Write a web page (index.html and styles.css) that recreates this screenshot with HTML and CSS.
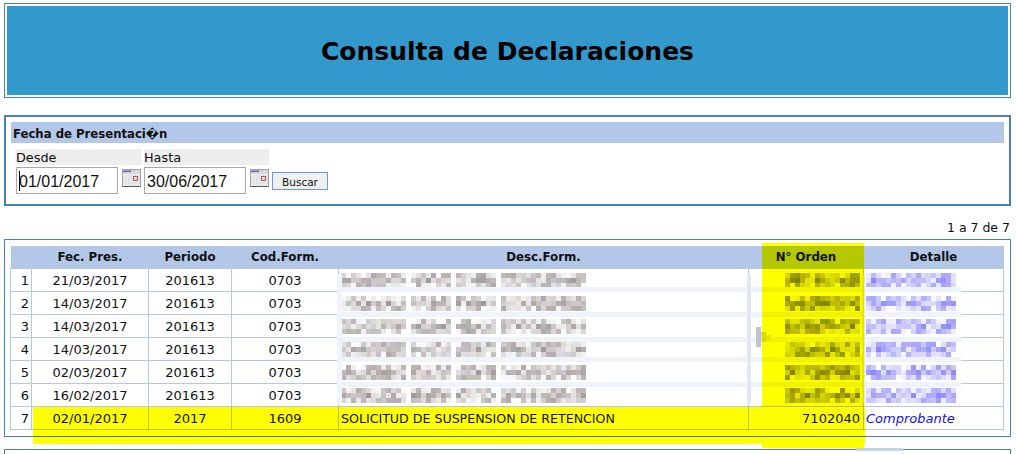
FILE: index.html
```html
<!DOCTYPE html>
<html lang="es">
<head>
<meta charset="utf-8">
<title>Consulta de Declaraciones</title>
<link rel="stylesheet" href="styles.css">
</head>
<body>
<main class="page">
  <header class="banner"><h1>Consulta de Declaraciones</h1></header>

  <section class="filter">
    <h2 class="filter-title">Fecha de Presentaci&#xFFFD;n</h2>
    <div class="filter-fields">
      <div class="field">
        <label class="field-label" for="desde">Desde</label>
        <div class="field-control">
          <input class="date-input" id="desde" value="01/01/2017">
          <span class="caret"></span>
          <svg class="cal" viewBox="0 0 19 19" width="19" height="19"><use href="#cal"/></svg>
        </div>
      </div>
      <div class="field">
        <label class="field-label" for="hasta">Hasta</label>
        <div class="field-control">
          <input class="date-input" id="hasta" value="30/06/2017">
          <svg class="cal" viewBox="0 0 19 19" width="19" height="19"><use href="#cal"/></svg>
        </div>
      </div>
      <button class="search" type="button">Buscar</button>
    </div>
  </section>

  <p class="pager">1 a 7 de 7</p>

  <section class="results">
    <table class="grid">
      <colgroup>
        <col class="c-n"><col class="c-fec"><col class="c-per"><col class="c-cod"><col class="c-desc"><col class="c-ord"><col class="c-det">
      </colgroup>
      <thead>
        <tr><th></th><th>Fec. Pres.</th><th>Periodo</th><th>Cod.Form.</th><th>Desc.Form.</th><th>N° Orden</th><th>Detalle</th></tr>
      </thead>
      <tbody>
        <tr><td class="num">1</td><td>21/03/2017</td><td>201613</td><td>0703</td><td class="left"><canvas class="mosaic" data-kind="desc" data-seed="11"></canvas></td><td class="right"><canvas class="mosaic" data-kind="ord" data-seed="12"></canvas></td><td class="left"><canvas class="mosaic" data-kind="det" data-seed="13"></canvas></td></tr>
        <tr><td class="num">2</td><td>14/03/2017</td><td>201613</td><td>0703</td><td class="left"><canvas class="mosaic" data-kind="desc" data-seed="21"></canvas></td><td class="right"><canvas class="mosaic" data-kind="ord" data-seed="22"></canvas></td><td class="left"><canvas class="mosaic" data-kind="det" data-seed="23"></canvas></td></tr>
        <tr><td class="num">3</td><td>14/03/2017</td><td>201613</td><td>0703</td><td class="left"><canvas class="mosaic" data-kind="desc" data-seed="31"></canvas></td><td class="right"><canvas class="mosaic" data-kind="ord" data-seed="32"></canvas></td><td class="left"><canvas class="mosaic" data-kind="det" data-seed="33"></canvas></td></tr>
        <tr><td class="num">4</td><td>14/03/2017</td><td>201613</td><td>0703</td><td class="left"><canvas class="mosaic" data-kind="desc" data-seed="41"></canvas></td><td class="right"><canvas class="mosaic" data-kind="ord" data-seed="42"></canvas></td><td class="left"><canvas class="mosaic" data-kind="det" data-seed="43"></canvas></td></tr>
        <tr><td class="num">5</td><td>02/03/2017</td><td>201613</td><td>0703</td><td class="left"><canvas class="mosaic" data-kind="desc" data-seed="51"></canvas></td><td class="right"><canvas class="mosaic" data-kind="ord" data-seed="52"></canvas></td><td class="left"><canvas class="mosaic" data-kind="det" data-seed="53"></canvas></td></tr>
        <tr><td class="num">6</td><td>16/02/2017</td><td>201613</td><td>0703</td><td class="left"><canvas class="mosaic" data-kind="desc" data-seed="61"></canvas></td><td class="right"><canvas class="mosaic" data-kind="ord" data-seed="62"></canvas></td><td class="left"><canvas class="mosaic" data-kind="det" data-seed="63"></canvas></td></tr>
        <tr><td class="num">7</td><td>02/01/2017</td><td>2017</td><td>1609</td><td class="left desc-text">SOLICITUD DE SUSPENSION DE RETENCION</td><td class="right">7102040</td><td class="left"><a class="link" href="#">Comprobante</a></td></tr>
      </tbody>
    </table>

    <div class="smudge band b1"></div>
    <div class="smudge band b2"></div>
    <div class="smudge band b3"></div>
    <div class="smudge band b4"></div>
    <div class="smudge band b5"></div>
    <div class="smudge vbar v1"></div>
    <div class="smudge vbar v2"></div>
    <div class="smudge vbar v3"></div>
    <svg class="blob" width="15" height="20" viewBox="0 0 15 20"><rect x="0" y="0" width="5" height="20" fill="#c4c4c4"/><rect x="5" y="5" width="5" height="10" fill="#d8d8d8"/><rect x="10" y="8" width="5" height="5" fill="#e4e4e4"/></svg>
    <div class="marker marker-row"></div>
    <div class="marker marker-col"></div>
  </section>

  <section class="next-panel"><div class="next-smudge"></div></section>
</main>

<svg class="defs" width="0" height="0" aria-hidden="true">
  <symbol id="cal" viewBox="0 0 19 19">
    <rect x="0.5" y="0.5" width="18" height="17" fill="#f0f0f0" stroke="#a0a0a0"/>
    <rect x="1" y="1" width="17" height="4" fill="#d8d8d8"/>
    <rect x="1" y="1.6" width="8" height="1.4" fill="#5a5ab0"/>
    <path d="M4 5v12M7 5v12M10 5v12M13 5v12M16 5v12M1 8h17M1 11h17M1 14h17" stroke="#dcdcdc" stroke-width="1" fill="none"/>
    <rect x="11.5" y="7.5" width="4" height="4" fill="#e8d8d8" stroke="#b06060"/>
    <path d="M0.5 17.5h18" stroke="#555"/>
  </symbol>
</svg>
<script src="mosaic.js"></script>
</body>
</html>
```
FILE: styles.css
```css
html, body { margin: 0; padding: 0; height: 454px; overflow: hidden; background: #fff; }
body { font-family: "DejaVu Sans", Verdana, sans-serif; font-size: 13px; color: #111; }

.page { width: 1007px; padding: 3px 0 0 4px; }

.banner { height: 95px; box-sizing: border-box; border: 1px solid #4682b4; padding: 2px; }
.banner h1 {
  margin: 0; height: 100%; box-sizing: border-box; padding-top: 2px; display: flex; align-items: center; justify-content: center;
  background: #3399cc; color: #000; font-size: 25px; font-weight: bold;
}

.filter {
  margin-top: 17px; height: 91px; box-sizing: border-box;
  border: 2px solid #4682b4; padding: 5px;
}
.filter-title {
  margin: 0; height: 21px; line-height: 24px; padding-left: 2px;
  background: #b3c8e8; font-size: 11.7px; font-weight: bold; color: #111;
}
.filter-fields { display: flex; align-items: flex-start; gap: 3px; padding: 6px 0 0 5px; }
.field { width: 125px; }
.field-label { display: block; height: 16px; line-height: 18px; background: #eeeeee; font-size: 12.8px; }
.field-control { display: flex; align-items: flex-start; gap: 4px; margin-top: 2px; position: relative; }
.date-input {
  width: 102px; height: 27px; box-sizing: border-box; margin: 0; padding: 2px 0 0 2px;
  border: 1px solid #a9a9a9; background: #fff; color: #111;
  font-family: "Liberation Sans", sans-serif; font-size: 16px;
}
.caret { position: absolute; left: 3px; top: 4px; width: 1px; height: 20px; background: #000; }
.cal { margin-top: 2px; display: block; flex: none; }
.search {
  margin: 23px 0 0 0; width: 56px; height: 18px; box-sizing: border-box; padding: 1px 0 0 0;
  border: 1px solid #6a9bd1; background: #f0f0f0; color: #111;
  font-family: "DejaVu Sans", sans-serif; font-size: 10.5px; line-height: 16px;
}

.pager { margin: 0; height: 33px; box-sizing: border-box; padding: 14px 1px 0 0; text-align: right; font-size: 12.5px; line-height: 15px; }

.results { position: relative; height: 198px; box-sizing: border-box; border: 1px solid #4682b4; padding: 6px; }
.grid { width: 993px; margin-left: -1px; table-layout: fixed; border-collapse: collapse; font-size: 13px; }
.c-n { width: 21px; } .c-fec { width: 117px; } .c-per { width: 83px; } .c-cod { width: 107px; }
.c-desc { width: 410px; } .c-ord { width: 115px; } .c-det { width: 140px; }
.grid th { height: 22px; padding: 0; background: #b3c8e8; font-size: 11.8px; font-weight: bold; text-align: center; border: 0; color: #111; }
.grid td { height: 22px; padding: 0; text-align: center; border: 1px solid #b3c8e8; white-space: nowrap; overflow: hidden; }
.grid td.num { text-align: right; padding-right: 2px; }
.grid td.left { text-align: left; padding-left: 2px; font-size: 12px; }
.grid td.desc-text { font-size: 12.6px; }
.grid td.right { text-align: right; padding-right: 3px; }
.link { color: #1010ee; font-style: italic; text-decoration: none; font-size: 13px; }
.mosaic { display: inline-block; vertical-align: middle; }

.smudge { position: absolute; background: #eff3fa; }
.band { left: 332px; width: 624px; height: 5px; }
.b1 { top: 47px; } .b2 { top: 72px; } .b3 { top: 97px; } .b4 { top: 117px; } .b5 { top: 142px; }
.vbar { top: 34px; height: 130px; width: 4px; background: #dfe8f4; }
.v1 { left: 742px; }
.v2 { left: 332px; width: 5px; background: #eff3fa; }
.v3 { left: 857px; width: 3px; }
.blob { position: absolute; left: 751px; top: 87px; }

.marker { position: absolute; background: #ffff00; mix-blend-mode: multiply; }
.marker-row { left: 28px; top: 167px; width: 832px; height: 37px; }
.marker-col { left: 757px; top: 3px; width: 102px; height: 205px; }

.next-panel { position: relative; margin-top: 12px; height: 20px; border: 1px solid #4682b4; }
.next-smudge { position: absolute; left: 851px; top: -2px; width: 47px; height: 3px; background: #c4d6e6; }

.defs { position: absolute; }
```
FILE: mosaic.js
```js
(function () {
  var kinds = {
    desc: { segs: [[0, 13], [14, 8], [23, 8], [32, 17]], rows: 3, tint: [150, 142, 142], spread: 0.75 },
    ord:  { segs: [[0, 15]], rows: 3, tint: [120, 120, 110], spread: 0.8 },
    det:  { segs: [[0, 18]], rows: 3, tint: [130, 125, 250], spread: 0.75 }
  };
  var size = 5;
  document.querySelectorAll('canvas.mosaic').forEach(function (c) {
    var k = kinds[c.dataset.kind];
    var seed = Number(c.dataset.seed) * 7919;
    function rnd() { seed = (seed * 16807) % 2147483647; return (seed & 0xffff) / 65535; }
    var last = k.segs[k.segs.length - 1];
    var cols = last[0] + last[1];
    c.width = cols * size;
    c.height = k.rows * size;
    var g = c.getContext('2d');
    k.segs.forEach(function (s) {
      for (var x = s[0]; x < s[0] + s[1]; x++) {
        for (var y = 0; y < k.rows; y++) {
          var a = rnd() * k.spread + (y === 1 ? 0.15 : 0);
          a = Math.min(a, 1);
          var r = Math.round(255 - (255 - k.tint[0]) * a + (rnd() - 0.5) * 10);
          var gr = Math.round(255 - (255 - k.tint[1]) * a + (rnd() - 0.5) * 10);
          var b = Math.round(255 - (255 - k.tint[2]) * a + (rnd() - 0.5) * 10);
          g.fillStyle = 'rgb(' + r + ',' + gr + ',' + b + ')';
          g.fillRect(x * size, y * size, size, size);
        }
      }
    });
  });
})();
```
